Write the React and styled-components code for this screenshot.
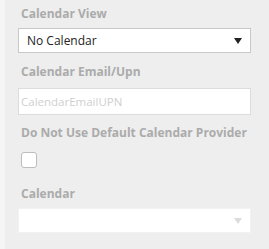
import React from 'react';
import styled, { createGlobalStyle } from 'styled-components';

const GlobalStyle = createGlobalStyle`
  html, body {
    margin: 0;
    padding: 0;
    background: #eeeeee;
  }
  body {
    font-family: "Open Sans", "Liberation Sans", sans-serif;
  }
`;

const Page = styled.div`
  display: flex;
  width: 269px;
  height: 249px;
  overflow: hidden;
`;

const Strip = styled.div`
  width: 5px;
  flex: none;
  background: #f5f5f5;
`;

const Form = styled.div`
  flex: 1;
  padding: 5px 18px 0 13px;
  display: flex;
  flex-direction: column;
`;

const Label = styled.div`
  font-size: 12px;
  font-weight: 700;
  color: #ababab;
  line-height: 18px;
  padding-left: 3px;
  margin-bottom: ${p => p.$gap || 5}px;
`;

const Field = styled.div`
  margin-bottom: ${p => p.$gap || 10}px;
`;

const Select = styled.div`
  height: 25px;
  box-sizing: border-box;
  background: #fff;
  border: 1px solid ${p => (p.$disabled ? '#f2f2f2' : '#c8c8c8')};
  display: flex;
  align-items: center;
  justify-content: space-between;
  padding: 0 8px 0 8px;
  font-size: 12px;
  color: #222;
`;

const Arrow = styled.span`
  width: 0;
  height: 0;
  border-left: 4px solid transparent;
  border-right: 4px solid transparent;
  border-top: 6px solid ${p => (p.$disabled ? '#dcdcdc' : '#222')};
  margin-top: 1px;
`;

const Input = styled.div`
  height: 27px;
  box-sizing: border-box;
  background: #fff;
  border: 1px solid #dcdcdc;
  display: flex;
  align-items: center;
  padding-left: 2px;
  font-size: 11.5px;
  color: #cfcfcf;
`;

const Checkbox = styled.div`
  width: 16px;
  height: 16px;
  box-sizing: border-box;
  margin-left: 3px;
  background: #fff;
  border: 1px solid #bdbdbd;
  border-radius: 3px;
`;

export default function App() {
  return (
    <Page>
      <GlobalStyle />
      <Strip />
      <Form>
        <Field>
          <Label>Calendar View</Label>
          <Select>
            No Calendar
            <Arrow />
          </Select>
        </Field>
        <Field $gap={9}>
          <Label $gap={7}>Calendar Email/Upn</Label>
          <Input>CalendarEmailUPN</Input>
        </Field>
        <Field $gap={17}>
          <Label $gap={10}>Do Not Use Default Calendar Provider</Label>
          <Checkbox />
        </Field>
        <Field>
          <Label>Calendar</Label>
          <Select $disabled>
            <span />
            <Arrow $disabled />
          </Select>
        </Field>
      </Form>
    </Page>
  );
}
